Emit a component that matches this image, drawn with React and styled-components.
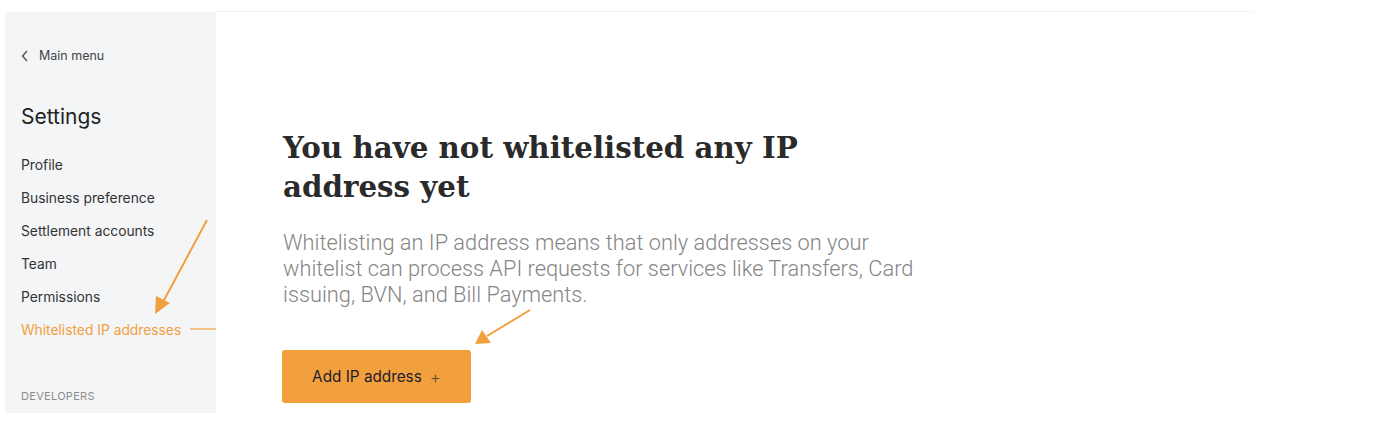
import styled, { createGlobalStyle } from 'styled-components'

const Global = createGlobalStyle`
    body {
        margin: 0;
        background: #fff;
        font-family: Inter, "Liberation Sans", sans-serif;
    }
`

const navItems = [
    'Profile',
    'Business preference',
    'Settlement accounts',
    'Team',
    'Permissions',
    'Whitelisted IP addresses',
]

function App() {
    return (
        <Page>
            <Global />
            <Sidebar>
                <Back>
                    <svg width="8" height="12" viewBox="0 0 8 12">
                        <path d="M6 1 L1.5 6 L6 11" fill="none" stroke="#444" strokeWidth="1.2" />
                    </svg>
                    Main menu
                </Back>
                <Title>Settings</Title>
                <Nav>
                    {navItems.map((item) => (
                        <NavItem key={item} $active={item === 'Whitelisted IP addresses'}>
                            {item}
                        </NavItem>
                    ))}
                </Nav>
                <Section>Developers</Section>
            </Sidebar>
            <Main>
                <Heading>You have not whitelisted any IP address yet</Heading>
                <Text>
                    Whitelisting an IP address means that only addresses on your whitelist can process API
                    requests for services like Transfers, Card issuing, BVN, and Bill Payments.
                </Text>
                <Button>
                    Add IP address <Plus>+</Plus>
                </Button>
            </Main>
            <Marks width="1388" height="431" viewBox="0 0 1388 431">
                <g stroke="#f2a03d" strokeWidth="2" fill="none">
                    <line x1="207" y1="220" x2="163" y2="302" />
                    <line x1="190" y1="329" x2="216" y2="329" strokeWidth="1.2" />
                    <line x1="530" y1="310" x2="487" y2="336" />
                </g>
                <polygon points="155,314 156,296 170,303" fill="#f2a03d" />
                <polygon points="475,344 482,330 491,343" fill="#f2a03d" />
            </Marks>
        </Page>
    )
}

const Page = styled.div`
    position: relative;
    display: flex;
    align-items: flex-start;
    padding: 12px 0 0 5px;
    height: 431px;
    box-sizing: border-box;
    overflow: hidden;
`
const Sidebar = styled.aside`
    width: 211px;
    height: 401px;
    background: #f4f5f7;
    padding: 34px 0 0 16px;
    box-sizing: border-box;
    display: flex;
    flex-direction: column;
`
const Back = styled.div`
    display: flex;
    align-items: center;
    gap: 10px;
    font-size: 12.5px;
    line-height: 20px;
    color: #444;
`
const Title = styled.h2`
    margin: 38px 0 0;
    font-size: 21px;
    font-weight: 400;
    line-height: 26px;
    color: #222;
`
const Nav = styled.nav`
    display: flex;
    flex-direction: column;
    margin-top: 19px;
`
const NavItem = styled.div`
    font-size: 13.8px;
    line-height: 33px;
    color: ${(p) => (p.$active ? '#f2a03d' : '#333')};
`
const Section = styled.div`
    margin-top: 42px;
    font-size: 11px;
    letter-spacing: 0.3px;
    text-transform: uppercase;
    color: #8c8c8c;
`
const Main = styled.main`
    width: 1037px;
    height: 419px;
    border-top: 1px solid #f3f3f3;
    margin-top: -1px;
    padding: 116px 0 0 67px;
    box-sizing: border-box;
`
const Heading = styled.h1`
    margin: 0;
    width: 560px;
    font-family: "DejaVu Serif", "Liberation Serif", serif;
    font-weight: 700;
    font-size: 29.3px;
    line-height: 39px;
    color: #2a2a2a;
`
const Text = styled.p`
    margin: 24px 0 0;
    width: 650px;
    font-family: Roboto, "Liberation Sans", sans-serif;
    font-weight: 300;
    font-size: 21.8px;
    line-height: 26px;
    color: #858585;
`
const Button = styled.button`
    margin-top: 42px;
    width: 189px;
    height: 53px;
    border: none;
    border-radius: 3px;
    background: #f2a03d;
    color: #1c1c2e;
    font-family: Inter, "Liberation Sans", sans-serif;
    font-size: 15.3px;
    display: flex;
    align-items: center;
    justify-content: center;
    gap: 8px;
    margin-left: -1px;
`
const Plus = styled.span`
    font-weight: 300;
    font-size: 17px;
    color: #5a4a3a;
`
const Marks = styled.svg`
    position: absolute;
    top: 0;
    left: 0;
    pointer-events: none;
`

export default App
